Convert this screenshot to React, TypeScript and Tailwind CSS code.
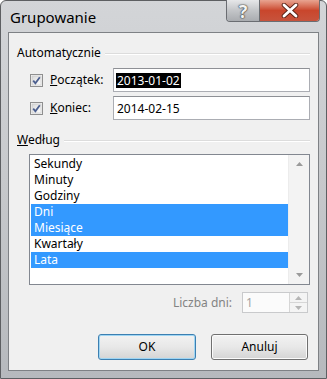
import React from 'react';

const font = "font-['Noto_Sans','Open_Sans',sans-serif]";

function CheckBox() {
  return (
    <svg width="13" height="13" viewBox="0 0 13 13" className="shrink-0">
      <defs>
        <linearGradient id="cbg" x1="0" y1="0" x2="1" y2="1">
          <stop offset="0" stopColor="#d8d8d8" />
          <stop offset="1" stopColor="#ffffff" />
        </linearGradient>
      </defs>
      <rect x="0.5" y="0.5" width="12" height="12" fill="#f4f4f4" stroke="#8f8f8f" />
      <rect x="2" y="2" width="9" height="9" fill="url(#cbg)" stroke="#c4c4c4" strokeWidth="0.6" />
      <path d="M3.2 6.6 L5.4 9.2 L9.8 3.2" fill="none" stroke="#4c5f8f" strokeWidth="1.8" />
    </svg>
  );
}

function GroupLabel({ children }: { children: React.ReactNode }) {
  return (
    <div className="flex items-center h-4 pl-2 pr-2">
      <span className="text-[12px] leading-4 text-black">{children}</span>
      <div className="flex-1 ml-1 mt-px border-t border-[#dcdcdc] border-b border-b-white" />
    </div>
  );
}

function Arrow({ up, color = '#9a9a9a' }: { up?: boolean; color?: string }) {
  return (
    <svg width="7" height="4" viewBox="0 0 7 4">
      <path d={up ? 'M0 4 L3.5 0 L7 4 Z' : 'M0 0 L3.5 4 L7 0 Z'} fill={color} />
    </svg>
  );
}

const items = [
  { t: 'Sekundy', s: false },
  { t: 'Minuty', s: false },
  { t: 'Godziny', s: false },
  { t: 'Dni', s: true },
  { t: 'Miesiące', s: true },
  { t: 'Kwartały', s: false },
  { t: 'Lata', s: true },
];

export default function App() {
  return (
    <div className={`w-[327px] h-[379px] flex flex-col rounded-t-[6px] border border-[#5d5f62] bg-gradient-to-b from-[#d3d5d8] via-[#c6c8cb] to-[#b6b9bd] ${font}`}>
      {/* title bar */}
      <div className="h-[31px] flex items-start shrink-0">
        <div className="pl-[9px] pt-[6px] text-[15px] leading-5 text-black">Grupowanie</div>
        <div className="flex-1" />
        <div className="flex mr-[6px] -mt-px h-[22px] rounded-b-[4px] border border-t-0 border-[#6a6d72] overflow-hidden">
          <div className="w-[33px] flex items-center justify-center bg-gradient-to-b from-[#e6e7e9] via-[#c3c5c8] to-[#a9acb0] border-r border-[#6a6d72]">
            <span className="text-[18px] font-bold leading-none text-[#f4f4f4] [text-shadow:0_0_1px_#333,0_0_1px_#333,0_0_2px_#555]">?</span>
          </div>
          <div className="w-[59px] flex items-center justify-center bg-gradient-to-b from-[#e8a491] via-[#c9462c] to-[#c7533c]">
            <svg width="18" height="15" viewBox="0 0 18 15">
              <path d="M3 2 L15 13 M15 2 L3 13" stroke="#5a2418" strokeWidth="4.6" strokeLinecap="round" />
              <path d="M3 2 L15 13 M15 2 L3 13" stroke="#ffffff" strokeWidth="2.8" strokeLinecap="round" />
            </svg>
          </div>
        </div>
      </div>

      {/* client */}
      <div className="mx-[7px] mb-[7px] flex-1 flex flex-col border border-[#7e8185] bg-[#f0f0f0] text-[12px] text-black">
        <div className="pt-3">
          <GroupLabel>Automatycznie</GroupLabel>
        </div>

        <div className="mt-[7px] flex items-center pl-[21px] pr-2">
          <CheckBox />
          <span className="ml-[7px] w-[63px] leading-4"><span className="underline">P</span>oczątek:</span>
          <div className="flex-1 h-6 flex items-center border border-[#abadb3] border-t-[#8e9095] bg-white pl-[2px]">
            <span className="bg-black text-white px-px leading-[15px]">2013-01-02</span>
          </div>
        </div>

        <div className="mt-1 flex items-center pl-[21px] pr-2">
          <CheckBox />
          <span className="ml-[7px] w-[63px] leading-4"><span className="underline">K</span>oniec:</span>
          <div className="flex-1 h-6 flex items-center border border-[#abadb3] border-t-[#8e9095] bg-white pl-[3px]">
            <span className="leading-[15px]">2014-02-15</span>
          </div>
        </div>

        <div className="mt-3">
          <GroupLabel><span className="underline">W</span>edług</GroupLabel>
        </div>

        <div className="mt-[6px] ml-5 mr-2 h-[131px] flex border border-[#828790] bg-white">
          <div className="flex-1 pt-px pl-px">
            {items.map((it) => (
              <div
                key={it.t}
                className={`h-4 leading-4 pl-[3px] ${it.s ? 'bg-[#3399ff] text-white' : 'text-black'}`}
              >
                {it.t}
              </div>
            ))}
          </div>
          <div className="w-[21px] flex flex-col items-center justify-between py-[7px] bg-[#f3f3f3] border-l border-[#ececec]">
            <Arrow up />
            <Arrow />
          </div>
        </div>

        <div className="mt-[7px] flex items-center justify-end pr-[10px]">
          <span className="text-[#838383] mr-[10px]">Liczba dni:</span>
          <div className="w-[66px] h-[21px] flex border border-[#c9cacc] bg-[#fbfbfb]">
            <span className="flex-1 pl-[3px] leading-[19px] text-[#a3a3a3]">1</span>
            <div className="w-[18px] flex flex-col border-l border-[#d6d6d6]">
              <div className="flex-1 flex items-center justify-center border-b border-[#d6d6d6] bg-[#f4f4f4]">
                <Arrow up color="#b5b5b5" />
              </div>
              <div className="flex-1 flex items-center justify-center bg-[#f4f4f4]">
                <Arrow color="#b5b5b5" />
              </div>
            </div>
          </div>
        </div>

        <div className="mt-[21px] flex justify-end gap-[15px] pr-[10px]">
          <button className="w-[98px] h-[26px] rounded-[3px] border border-[#3c7fb1] shadow-[inset_0_0_0_1px_#9fd5f3] bg-gradient-to-b from-[#f2f2f2] via-[#e8e8e8] to-[#d4d4d4] text-[12px]">
            OK
          </button>
          <button className="w-[97px] h-[26px] rounded-[3px] border border-[#707070] shadow-[inset_0_0_0_1px_#fbfbfb] bg-gradient-to-b from-[#f2f2f2] via-[#e8e8e8] to-[#d4d4d4] text-[12px]">
            Anuluj
          </button>
        </div>
      </div>
    </div>
  );
}
